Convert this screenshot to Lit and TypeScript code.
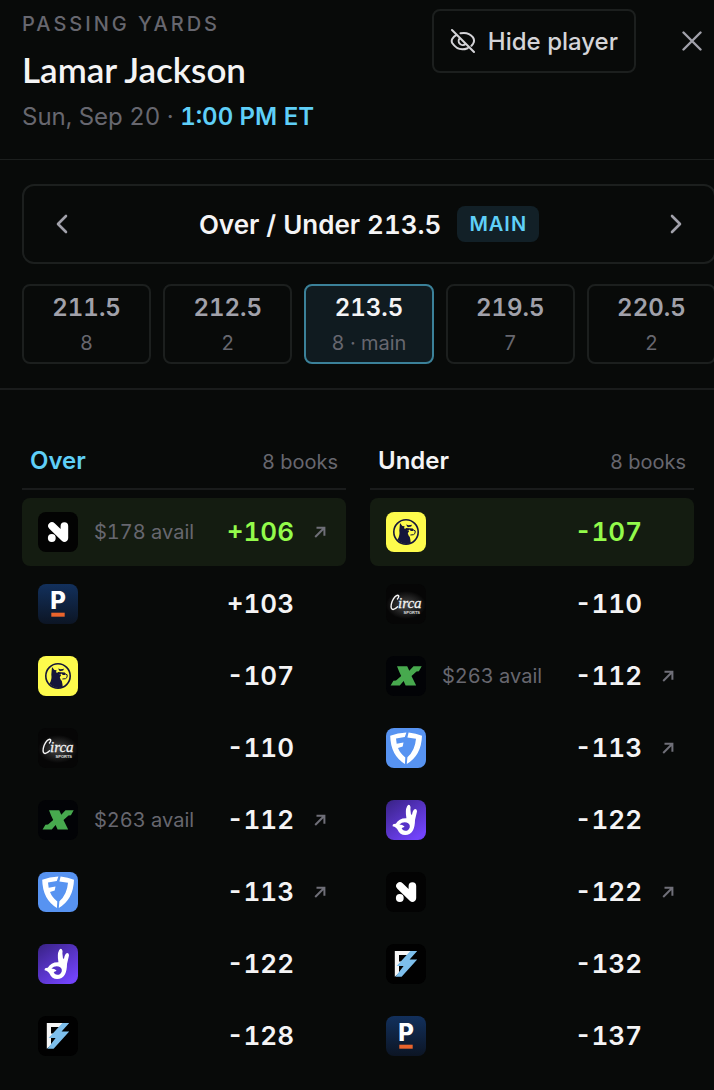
import { LitElement, css, html, nothing, svg } from 'lit';
import { customElement, property, state } from 'lit/decorators.js';
import { classMap } from 'lit/directives/class-map.js';

type BookId = 'novig' | 'pinnacle' | 'yellow' | 'circa' | 'exchange' | 'shield' | 'hand' | 'bolt';

interface Quote {
  book: BookId;
  odds: string;
  avail?: string;
  link?: boolean;
}

interface Line {
  value: string;
  books: number;
  main?: boolean;
}

const LINES: Line[] = [
  { value: '211.5', books: 8 },
  { value: '212.5', books: 2 },
  { value: '213.5', books: 8, main: true },
  { value: '219.5', books: 7 },
  { value: '220.5', books: 2 },
];

const OVER: Quote[] = [
  { book: 'novig', odds: '+106', avail: '$178 avail', link: true },
  { book: 'pinnacle', odds: '+103' },
  { book: 'yellow', odds: '-107' },
  { book: 'circa', odds: '-110' },
  { book: 'exchange', odds: '-112', avail: '$263 avail', link: true },
  { book: 'shield', odds: '-113', link: true },
  { book: 'hand', odds: '-122' },
  { book: 'bolt', odds: '-128' },
];

const UNDER: Quote[] = [
  { book: 'yellow', odds: '-107' },
  { book: 'circa', odds: '-110' },
  { book: 'exchange', odds: '-112', avail: '$263 avail', link: true },
  { book: 'shield', odds: '-113', link: true },
  { book: 'hand', odds: '-122' },
  { book: 'novig', odds: '-122', link: true },
  { book: 'bolt', odds: '-132' },
  { book: 'pinnacle', odds: '-137' },
];

const LOGOS = {
  novig: svg`
    <rect width="40" height="40" fill="#030303" />
    <path d="M14 14 26.4 26V14" fill="none" stroke="#fff" stroke-width="7.6" stroke-linecap="round" stroke-linejoin="round" />
    <circle cx="13.8" cy="26" r="3.9" fill="#fff" />
  `,
  pinnacle: svg`
    <defs>
      <linearGradient id="navy" x2="0" y2="1">
        <stop offset="0" stop-color="#12305c" />
        <stop offset="1" stop-color="#0c1524" />
      </linearGradient>
    </defs>
    <rect width="40" height="40" fill="url(#navy)" />
    <text class="p" x="20" y="25" text-anchor="middle">P</text>
    <rect x="13.3" y="28.7" width="13.4" height="4" fill="#ea642c" />
  `,
  yellow: svg`
    <rect width="40" height="40" fill="#fdfb4c" />
    <circle cx="20" cy="20" r="12.2" fill="none" stroke="#15163a" stroke-width="1.6" />
    <path d="M11.4 27.6Q14.2 24 13.3 18.6L14 11l2.4 3 2.2.2-.6 2 1.6.8 1.4-.4.2 2.2 2 .2-1.4 2.2.8 2.4 1.2 1.4q.8 3 1 6.6Q16 33.4 11.4 27.6z" fill="#15163a" />
    <path d="M20 12.6l2.6.6 3.4-.4-.8 1.8-3.4.6z" fill="#15163a" />
    <path d="M19.4 16l7.4.4 1 1.4-.8 1.2h-2.2l-1.4-1.4-1 1.2h-1.8z" fill="#15163a" />
    <path d="M27.4 18l1.8.8-.2 2.6q-.8 1.8-4.6 1.6" fill="none" stroke="#15163a" stroke-width="1" />
  `,
  circa: svg`
    <defs>
      <radialGradient id="smoke">
        <stop offset="0" stop-color="#484848" />
        <stop offset="1" stop-color="#484848" stop-opacity="0" />
      </radialGradient>
    </defs>
    <rect width="40" height="40" fill="#060606" />
    <ellipse cx="20" cy="21" rx="20" ry="14" fill="url(#smoke)" />
    <path d="M11.4 15q2.6-3.2.4-3.8-3 .2-5.6 6-2.4 6.6.2 8.2 2.2.6 5.2-2.6" fill="none" stroke="#f4f4f4" stroke-width="1.4" stroke-linecap="round" />
    <text class="circa" x="12" y="24">irca</text>
    <text class="sports" x="34" y="29.6" text-anchor="end">SPORTS</text>
  `,
  exchange: svg`
    <rect width="40" height="40" fill="#020306" />
    <path d="M11 10.2h10.2l2.1 4.5 4.2-4.5h8.2l-2.8 5-2.4.2-5 4.6 4.7 9.6H19.6l-2-4.6-3.8 4.6H4.6l2.8-4.8 2.6-.2 5.2-4.6-2-4.3z" fill="#47a94e" />
  `,
  shield: svg`
    <rect width="40" height="40" fill="#5793f1" />
    <path d="M20.4 4.4Q11.6 4.8 4.2 7.8 4.6 27.4 18.9 36l.4-6.6q-5.2-4-7.3-9.4l4.7-1.4.8-4-6.8 1.2L10 10.6l8.8-1.6z" fill="#fff" />
    <path d="M22.6 4.4Q30 5 36 7.8 35.4 27.4 20.8 36l.6-6.8q7.6-6.4 8.6-18.4l-8.6-1.4z" fill="#fff" />
  `,
  hand: svg`
    <defs>
      <linearGradient id="violet" x2=".7" y2="1">
        <stop offset="0" stop-color="#382284" />
        <stop offset="1" stop-color="#7243fb" />
      </linearGradient>
    </defs>
    <rect width="40" height="40" fill="url(#violet)" />
    <path d="M20.4 18Q19 10 21 6.4 22.2 4 23.8 5.2 25 6.4 24.4 9.6L25 14.6l1 .2q.6-4.6 3-5.8 2.2-.2 2 2.6l-2 8.4q0 14.6-9.8 15-5.4 0-7.6-5.2-1-2.6-5-3.6-.2-2.6 3.2-2.4 3-5.8 10.6-5.6z" fill="#fff" />
    <path d="M13.4 24.6q3.2-3 7.2-2 3.6 1.4 3.2 4.6-1.2 3.8-4.8 3.6-2.6-.4-3.4-2.8 1.8-.2 3-1.4-2.2-1.8-5.2-2z" fill="#5632c8" />
  `,
  bolt: svg`
    <rect width="40" height="40" fill="#010101" />
    <path d="M8.8 7H26l-3.6 4H13v6.4h3.4l-3.4 3.8V29l-4.2 3.8z" fill="#f6f6f6" />
    <path d="M24.4 7h6.8l-7.6 8.6h7.6L15.6 32.8H9.4L17.6 22h-7z" fill="#7dbfec" />
  `,
};

@customElement('book-logo')
export class BookLogo extends LitElement {
  static styles = css`
    :host {
      display: block;
      flex: none;
      width: 40px;
      height: 40px;
      border-radius: 8px;
      overflow: hidden;
    }

    svg {
      display: block;
    }

    .p {
      font: 800 24px Inter, sans-serif;
      fill: #fff;
    }

    .circa {
      font: italic 400 15px 'Liberation Serif', serif;
      fill: #f4f4f4;
      stroke: #f4f4f4;
      stroke-width: 0.3px;
    }

    .sports {
      font: 700 4px 'Liberation Sans Narrow', 'Liberation Sans', sans-serif;
      fill: #e0e0e0;
    }
  `;

  @property() book: BookId = 'novig';

  render() {
    return html`<svg width="40" height="40" viewBox="0 0 40 40" aria-hidden="true">${LOGOS[this.book]}</svg>`;
  }
}

@customElement('odds-column')
export class OddsColumn extends LitElement {
  static styles = css`
    :host {
      display: block;
      min-width: 0;
    }

    .head {
      display: flex;
      align-items: baseline;
      justify-content: space-between;
      padding: 12px 8px 11px;
      border-bottom: 2px solid #1a1c1c;
    }

    .title {
      margin: 0;
      font-size: 24px;
      line-height: 30px;
      font-weight: 600;
      color: #f4f4f5;
    }

    .title.over {
      color: #5fcff8;
    }

    .count,
    .avail {
      font-size: 20px;
      line-height: 30px;
      color: #67676f;
    }

    .rows {
      display: flex;
      flex-direction: column;
      gap: 4px;
      margin: 8px 0 0;
      padding: 0;
      list-style: none;
    }

    .row {
      display: flex;
      align-items: center;
      gap: 16px;
      height: 68px;
      padding: 0 16px;
      border-radius: 8px;
      box-sizing: border-box;
    }

    .row.best {
      background: #141c11;
    }

    .avail {
      white-space: nowrap;
    }

    .odds {
      margin-left: auto;
      font-size: 26px;
      line-height: 32px;
      font-weight: 600;
      color: #f4f4f5;
    }

    .best .odds {
      color: #93fb4b;
    }

    .out {
      display: flex;
      justify-content: center;
      width: 20px;
      color: #6f6f78;
    }
  `;

  @property() label = '';
  @property({ attribute: false }) quotes: Quote[] = [];

  render() {
    return html`
      <div class="head">
        <h2 class=${classMap({ title: true, over: this.label === 'Over' })}>${this.label}</h2>
        <span class="count">${this.quotes.length} books</span>
      </div>
      <ul class="rows">
        ${this.quotes.map(
          (quote, i) => html`
            <li class=${classMap({ row: true, best: i === 0 })}>
              <book-logo .book=${quote.book}></book-logo>
              ${quote.avail ? html`<span class="avail">${quote.avail}</span>` : nothing}
              <span class="odds">${quote.odds}</span>
              ${quote.link
                ? html`
                    <a class="out" href="#" aria-label="Open bet at ${quote.odds}">
                      <svg width="12" height="12" viewBox="0 0 12 12" fill="none" stroke="currentColor" stroke-width="2">
                        <path d="M1.2 11 10.4 1.8M2.5 1.8h7.9v7.9" />
                      </svg>
                    </a>
                  `
                : html`<span class="out"></span>`}
            </li>
          `,
        )}
      </ul>
    `;
  }
}

@customElement('app-root')
export class AppRoot extends LitElement {
  static styles = css`
    :host {
      display: block;
      min-height: 100vh;
      overflow: hidden;
      background: #080a09;
      font-family: Inter, sans-serif;
      font-variant-numeric: tabular-nums;
      color: #f4f4f5;
    }

    button {
      font: inherit;
      font-variant-numeric: inherit;
      background: none;
      border: 0;
      padding: 0;
      cursor: pointer;
    }

    svg {
      display: block;
    }

    .header {
      display: flex;
      align-items: flex-start;
      justify-content: space-between;
      padding: 9px 12px 26px 22px;
      border-bottom: 1px solid #1c1f1e;
    }

    .market {
      margin: 0;
      font-size: 20px;
      line-height: 30px;
      font-weight: 500;
      letter-spacing: 3px;
      text-transform: uppercase;
      color: #67676f;
    }

    .player {
      margin: 7px 0 9px;
      font-family: Lato, sans-serif;
      font-size: 35px;
      line-height: 46px;
      font-weight: 600;
    }

    .when {
      margin: 0;
      font-size: 24px;
      line-height: 32px;
      color: #67676f;
    }

    .time {
      font-weight: 600;
      color: #5fcff8;
    }

    .actions {
      display: flex;
      align-items: center;
      gap: 46px;
    }

    .hide {
      display: flex;
      align-items: center;
      gap: 12px;
      height: 64px;
      padding: 0 16px;
      border: 2px solid #1c1f1e;
      border-radius: 8px;
      font-size: 24px;
      font-weight: 500;
      color: #d4d4d8;
    }

    .close {
      color: #a1a1aa;
    }

    .picker {
      padding: 24px 0;
      border-bottom: 2px solid #1a1c1c;
    }

    /* Both strips run slightly past the right edge of the sheet. */
    .stepper,
    .lines {
      margin: 0 -2px 0 22px;
    }

    .stepper {
      display: flex;
      align-items: center;
      justify-content: space-between;
      height: 80px;
      box-sizing: border-box;
      padding: 0 28px;
      border: 2px solid #1c1f1e;
      border-radius: 12px;
    }

    .step {
      color: #a1a1aa;
    }

    .current {
      display: flex;
      align-items: center;
      gap: 16px;
      font-size: 26px;
      font-weight: 600;
    }

    .badge {
      padding: 0 12px;
      border-radius: 8px;
      background: #122027;
      font-size: 20px;
      line-height: 36px;
      letter-spacing: 1px;
      color: #5fcff8;
    }

    .lines {
      display: grid;
      grid-template-columns: repeat(5, 1fr);
      gap: 12px;
      margin-top: 20px;
    }

    .line {
      display: flex;
      flex-direction: column;
      align-items: center;
      gap: 4px;
      height: 80px;
      padding-top: 6px;
      border: 2px solid #1c1f1e;
      border-radius: 8px;
    }

    .line.active {
      border-color: #3b8199;
      background: #101b20;
    }

    .value {
      font-size: 24px;
      line-height: 32px;
      font-weight: 600;
      color: #a1a1aa;
    }

    .active .value {
      color: #f4f4f5;
    }

    .books {
      font-size: 20px;
      line-height: 30px;
      color: #67676f;
    }

    .columns {
      display: grid;
      grid-template-columns: 1fr 1fr;
      gap: 24px;
      padding: 44px 20px 20px 22px;
    }
  `;

  @state() private selected = LINES.findIndex((line) => line.main);

  private step(by: number) {
    this.selected = Math.min(LINES.length - 1, Math.max(0, this.selected + by));
  }

  render() {
    const current = LINES[this.selected];

    return html`
      <header class="header">
        <div>
          <p class="market">Passing Yards</p>
          <h1 class="player">Lamar Jackson</h1>
          <p class="when">Sun, Sep 20 · <span class="time">1:00 PM ET</span></p>
        </div>
        <div class="actions">
          <button class="hide">
            <svg width="26" height="26" viewBox="0 0 26 26" fill="none" stroke="currentColor" stroke-width="2" stroke-linecap="round" stroke-linejoin="round">
              <path d="M2 2l22 22M10.5 5.3Q18.4 3.6 23 9.4q2.1 3.4 0 6.4l-1.6 2M6.4 6.8Q3.6 8.4 2.2 11q-1 2 0 4Q8.3 24 17.6 20.2M9.8 10.2a4 4 0 0 0 5.8 5.6" />
            </svg>
            Hide player
          </button>
          <button class="close" aria-label="Close">
            <svg width="20" height="20" viewBox="0 0 20 20" fill="none" stroke="currentColor" stroke-width="2.4" stroke-linecap="round">
              <path d="M1.5 1.5l17 17M18.5 1.5l-17 17" />
            </svg>
          </button>
        </div>
      </header>

      <section class="picker">
        <div class="stepper">
          <button class="step" aria-label="Previous line" @click=${() => this.step(-1)}>
            <svg width="20" height="20" viewBox="0 0 20 20" fill="none" stroke="currentColor" stroke-width="2.6" stroke-linecap="round" stroke-linejoin="round">
              <path d="M14 2 6 10l8 8" />
            </svg>
          </button>
          <div class="current">
            <span>Over / Under ${current.value}</span>
            ${current.main ? html`<span class="badge">MAIN</span>` : nothing}
          </div>
          <button class="step" aria-label="Next line" @click=${() => this.step(1)}>
            <svg width="20" height="20" viewBox="0 0 20 20" fill="none" stroke="currentColor" stroke-width="2.6" stroke-linecap="round" stroke-linejoin="round">
              <path d="M6 2l8 8-8 8" />
            </svg>
          </button>
        </div>
        <div class="lines">
          ${LINES.map(
            (line, i) => html`
              <button class=${classMap({ line: true, active: i === this.selected })} @click=${() => (this.selected = i)}>
                <span class="value">${line.value}</span>
                <span class="books">${line.books}${line.main ? ' · main' : ''}</span>
              </button>
            `,
          )}
        </div>
      </section>

      <main class="columns">
        <odds-column label="Over" .quotes=${OVER}></odds-column>
        <odds-column label="Under" .quotes=${UNDER}></odds-column>
      </main>
    `;
  }
}
